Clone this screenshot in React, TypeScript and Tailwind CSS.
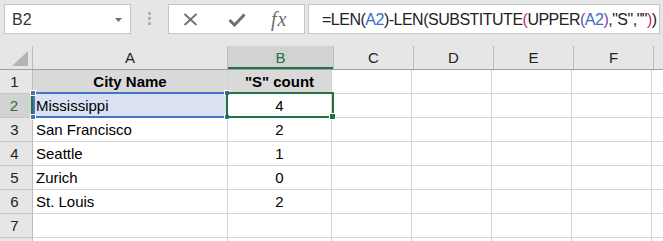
import React from 'react';

type RowData = { n: number; a: string; b: string; head?: boolean };

const rows: RowData[] = [
  { n: 1, a: 'City Name', b: '"S" count', head: true },
  { n: 2, a: 'Mississippi', b: '4' },
  { n: 3, a: 'San Francisco', b: '2' },
  { n: 4, a: 'Seattle', b: '1' },
  { n: 5, a: 'Zurich', b: '0' },
  { n: 6, a: 'St. Louis', b: '2' },
  { n: 7, a: '', b: '' },
  { n: 8, a: '', b: '' },
];

const emptyCols = ['w-[80px]', 'w-[80px]', 'w-[80px]', 'w-[80px]'];

const Handle = ({ className }: { className: string }) => (
  <div className={`absolute w-[6px] h-[6px] bg-[#4472c4] border border-white ${className}`} />
);

export default function App() {
  return (
    <div className="w-[663px] h-[241px] overflow-hidden bg-white font-['Liberation_Sans',Arial,sans-serif] text-[#222]">
      {/* Formula bar */}
      <div className="h-[46px] bg-[#e6e6e6] flex items-start pt-[4px]">
        <div className="ml-[4px] w-[127px] h-[30px] bg-white border border-[#c6c6c6] flex items-center justify-between pl-[7px] pr-[8px] pt-[2px]">
          <span className="text-[16px] text-[#333]">B2</span>
          <svg width="7" height="4" viewBox="0 0 7 4">
            <polygon points="0,0 7,0 3.5,4" fill="#707070" />
          </svg>
        </div>
        <div className="ml-[17px] mt-[8px] flex flex-col gap-[2px]">
          <div className="w-[3px] h-[3px] bg-[#b3b3b3]" />
          <div className="w-[3px] h-[3px] bg-[#b3b3b3]" />
          <div className="w-[3px] h-[3px] bg-[#b3b3b3]" />
        </div>
        <div className="ml-[17px] w-[137px] h-[30px] bg-white border border-[#c6c6c6] flex items-center">
          <svg className="ml-[14px] mt-[1px]" width="15" height="13" viewBox="0 0 15 13">
            <path d="M1.5 1 L13.5 12 M13.5 1 L1.5 12" stroke="#707070" strokeWidth="1.8" fill="none" />
          </svg>
          <svg className="ml-[30px] mt-[1px]" width="18" height="14" viewBox="0 0 18 14">
            <polyline points="1.5,7 6.5,12 16.5,1.5" stroke="#707070" strokeWidth="3" fill="none" />
          </svg>
          <span className="ml-[25px] font-['Liberation_Serif',serif] italic text-[20px] leading-none tracking-[1px] text-[#6d6d6d]">
            fx
          </span>
        </div>
        <div className="ml-[3px] w-[352px] h-[30px] bg-white border border-[#c6c6c6] flex items-center pl-[13px] pt-[2px] text-[16px] tracking-[-0.5px] text-[#222] whitespace-nowrap">
          <span>=LEN(</span>
          <span className="text-[#3a6cc4]">A2</span>
          <span>)-LEN(SUBSTITUTE</span>
          <span className="text-[#d02a5a]">(</span>
          <span>UPPER</span>
          <span className="text-[#7a3fb0]">(</span>
          <span className="text-[#3a6cc4]">A2</span>
          <span className="text-[#7a3fb0]">)</span>
          <span>,"S",""</span>
          <span className="text-[#d02a5a]">)</span>
          <span>)</span>
        </div>
      </div>

      {/* Sheet grid */}
      <div className="relative">
        {/* Column headers */}
        <div className="flex h-[24px] bg-[#e6e6e6] border-b border-[#9e9e9e] text-[15px]">
          <div className="w-[33px] shrink-0 border-r border-[#bcbcbc] flex items-end justify-end pr-[4px] pb-[3px]">
            <svg width="16" height="15" viewBox="0 0 16 15">
              <polygon points="16,0 16,15 0,15" fill="#b4b4b4" />
            </svg>
          </div>
          <div className="w-[195px] shrink-0 border-r border-[#bcbcbc] flex items-center justify-center pt-[1px]">A</div>
          <div className="w-[105px] shrink-0 bg-[#d2d2d2] border-b-2 border-[#217346] flex items-center justify-center text-[#217346] pt-[3px]">
            B
          </div>
          {['C', 'D', 'E', 'F'].map((c) => (
            <div key={c} className="w-[80px] shrink-0 border-l border-[#bcbcbc] flex items-center justify-center pt-[1px]">
              {c}
            </div>
          ))}
          <div className="flex-1 border-l border-[#bcbcbc]" />
        </div>

        {/* Rows */}
        {rows.map((r) => {
          const sel = r.n === 2;
          return (
            <div key={r.n} className="flex h-[24px] text-[15px]">
              <div
                className={`w-[33px] shrink-0 border-b border-[#c8c8c8] flex items-end justify-center pr-[3px] ${
                  sel
                    ? 'bg-[#d2d2d2] border-r-2 border-r-[#217346] text-[#2f6b47]'
                    : 'bg-[#e6e6e6] border-r border-r-[#bcbcbc]'
                }`}
              >
                {r.n < 8 ? r.n : ''}
              </div>
              <div
                className={`w-[195px] shrink-0 border-r border-b border-[#d4d4d4] flex items-end text-black whitespace-nowrap ${
                  r.head ? 'bg-[#d9d9d9] justify-center font-bold' : sel ? 'bg-[#d9e1f2] pl-[3px]' : 'pl-[3px]'
                }`}
              >
                {r.a}
              </div>
              <div
                className={`w-[104px] shrink-0 border-r border-b border-[#d4d4d4] flex items-end justify-center text-black whitespace-nowrap ${
                  r.head ? 'bg-[#d9d9d9] font-bold' : ''
                }`}
              >
                {r.b}
              </div>
              {emptyCols.map((w, i) => (
                <div key={i} className={`${w} shrink-0 border-r border-b border-[#d4d4d4]`} />
              ))}
              <div className="flex-1 border-b border-[#d4d4d4]" />
            </div>
          );
        })}

        {/* Formula reference highlight on A2 */}
        <div className="absolute left-[33px] top-[46px] w-[195px] h-[26px] border-2 border-[#4472c4]" />
        <Handle className="left-[30px] top-[44px]" />
        <Handle className="left-[224px] top-[44px]" />
        <Handle className="left-[30px] top-[68px]" />
        <Handle className="left-[224px] top-[68px]" />

        {/* Active cell B2 */}
        <div className="absolute left-[226px] top-[46px] w-[108px] h-[26px] border-2 border-[#217346]" />
        <div className="absolute left-[329px] top-[67px] w-[7px] h-[7px] bg-[#217346] border border-white" />
      </div>
    </div>
  );
}
